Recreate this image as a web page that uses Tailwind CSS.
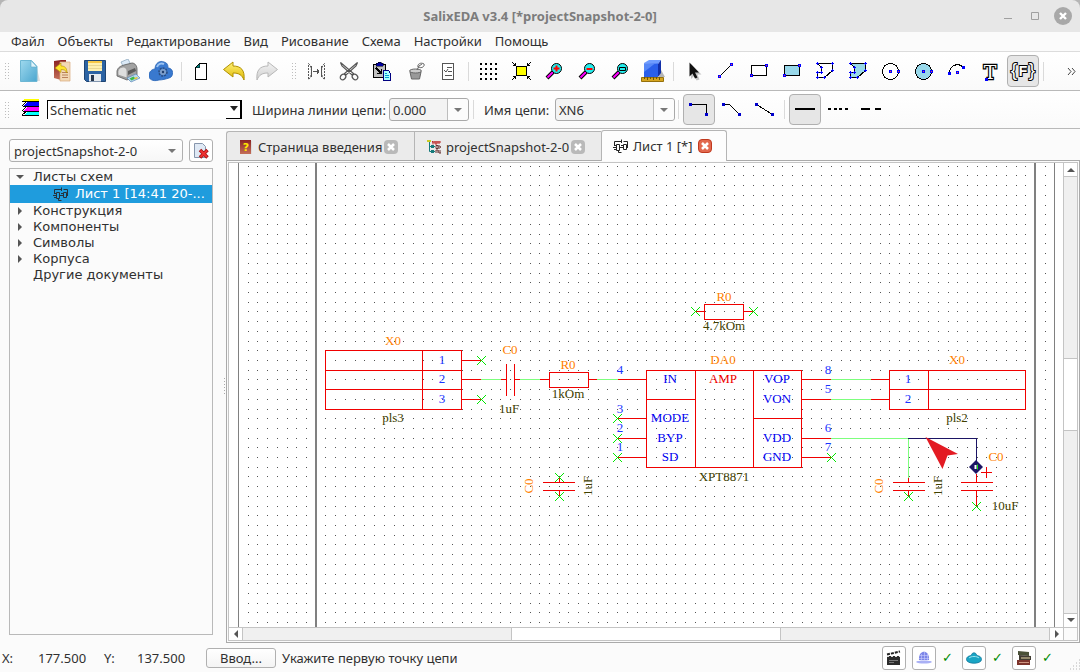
<!doctype html>
<html lang="ru">
<head>
  <meta charset="UTF-8">
  <meta name="viewport" content="width=device-width, initial-scale=1.0">
  <script src="https://cdn.jsdelivr.net/npm/@tailwindcss/browser@4"></script>
  <title>SalixEDA v3.4</title>
</head>
<body class="h-screen flex flex-col overflow-hidden bg-[#fbfbfb] font-['Noto_Sans',sans-serif] text-[13px] leading-4 text-[#303030]">

  <!-- shared icon parts -->
  <svg class="absolute size-0">
    <defs>
      <linearGradient id="gPage" x1="0" y1="0" x2="1" y2="1"><stop offset="0" stop-color="#9fd9ee"/><stop offset="1" stop-color="#4ba6cf"/></linearGradient>
      <linearGradient id="gYellow" x1="0" y1="0" x2="0" y2="1"><stop offset="0" stop-color="#fff27a"/><stop offset="1" stop-color="#dfb800"/></linearGradient>
      <linearGradient id="gGrey" x1="0" y1="0" x2="0" y2="1"><stop offset="0" stop-color="#f4f4f4"/><stop offset="1" stop-color="#cfcfcf"/></linearGradient>
      <linearGradient id="gBook" x1="0" y1="0" x2="0" y2="1"><stop offset="0" stop-color="#8a2222"/><stop offset="1" stop-color="#c4705a"/></linearGradient>
      <symbol id="sheet" viewBox="0 0 16 16">
        <path d="M1.500 7V3.500h7M8.500 1.500v3.500M10.500 3.500h4V9M0 9.500h3M7 9.500h3M13 9.500h2M5.500 13v1.500h3" fill="none" stroke="currentColor"/>
        <path d="M3.500 6.500h3v6h-3zM10.500 6.500h3v5h-3z" fill="none" stroke="currentColor"/>
        <path d="M1 7.500h2M1 11.500h2M8 7.500h2" stroke="currentColor"/>
      </symbol>
      <symbol id="cross" viewBox="0 0 14 14">
        <path d="M4 4l6 6M10 4l-6 6" stroke="#fff" stroke-width="2.500"/>
      </symbol>
    </defs>
  </svg>

  <!-- title bar -->
  <header class="bg-[#b5b5b5]">
    <div class="relative flex h-8 items-center justify-center rounded-t-lg bg-[#e7e7e7]">
      <h1 class="font-bold text-[#7c7c7c]">SalixEDA v3.4 [*projectSnapshot-2-0]</h1>
      <div class="absolute inset-y-0 right-2 flex items-center gap-[11px]">
        <button aria-label="Свернуть" class="size-4"><svg class="size-4" viewBox="0 0 16 16"><path d="M4 10.500h8" stroke="#a0a0a0"/></svg></button>
        <button aria-label="Развернуть" class="size-4"><svg class="size-4" viewBox="0 0 16 16"><path d="M4.500 4.500h7v7h-7z" fill="none" stroke="#a0a0a0"/></svg></button>
        <button aria-label="Закрыть" class="size-[18px]"><svg class="size-[18px]" viewBox="0 0 18 18"><circle cx="9" cy="9" r="9" fill="#a8a8a8"/><path d="M6 6l6 6M12 6l-6 6" stroke="#fff" stroke-width="2.400"/></svg></button>
      </div>
    </div>
  </header>

  <!-- menu -->
  <nav class="flex h-5 items-center gap-[13px] border-b border-[#dcdcdc] pb-[2px] pl-[11px]">
    <a href="#">Файл</a>
    <a href="#">Объекты</a>
    <a href="#">Редактирование</a>
    <a href="#">Вид</a>
    <a href="#">Рисование</a>
    <a href="#">Схема</a>
    <a href="#">Настройки</a>
    <a href="#">Помощь</a>
  </nav>

  <!-- main toolbar -->
  <div class="flex h-[39px] items-center border-b border-[#b9b9b9] bg-linear-to-b from-white to-[#fafafa]">
    <svg class="mr-[3px] h-6 w-[10px]" viewBox="0 0 10 24" shape-rendering="crispEdges"><path d="M5.500 4v17M8.500 4v17" stroke="#bdbdbd" stroke-dasharray="1 2"/></svg>
    <div class="flex gap-px">
      <button aria-label="Новый" class="flex h-8 w-8 items-center justify-center"><svg class="size-6" viewBox="0 0 24 24"><path d="M20 9l3 13H8z" fill="#ddd"/><path d="M3.500 1.500h11l5.500 6v15h-16.500z" fill="url(#gPage)" stroke="#6db7d4"/><path d="M14 1.500v6.500h6z" fill="#e0f4fb" stroke="#5fa9c8" stroke-width=".6"/></svg></button>
      <button aria-label="Открыть" class="flex h-8 w-8 items-center justify-center"><svg class="size-6" viewBox="0 0 24 24"><path d="M4 2l7-1h5v3h-5v17l-7-2z" fill="url(#gBook)"/><path d="M10 3h10v19h-10z" fill="#f3d9b5" stroke="#d9ab7d" stroke-width=".7"/><path d="M12 16h6M12 18.500h6M12 13.500h6" stroke="#b9825c"/><path d="M5 9l6-5v3c4 0 6 2 6 7-1.500-3-3-3.500-6-3.500v3z" fill="#ffe52e" stroke="#b08c00" stroke-width=".6"/></svg></button>
      <button aria-label="Сохранить" class="flex h-8 w-8 items-center justify-center"><svg class="size-6" viewBox="0 0 24 24"><path d="M1.500 1.500h21v21h-19l-2-2z" fill="#2c63a3" stroke="#1f4573"/><path d="M5 2h14v10H5z" fill="#fff1b0"/><path d="M5 2h14v2H5z" fill="#f7c948"/><path d="M5 6.500h14M5 9.500h14" stroke="#e0cf8a" stroke-width=".7"/><path d="M6 15h12v7.500H6z" fill="#e6eaee"/><path d="M8 16h3v6H8z" fill="#27374d"/></svg></button>
      <button aria-label="Печать" class="flex h-8 w-8 items-center justify-center"><svg class="size-6" viewBox="0 0 24 24"><path d="M5 3l7-3 3 6-7 3z" fill="#dceaf7" stroke="#8fa9c0" stroke-width=".8"/><path d="M1 12c1-4 4-5 7-6l8-2c3 0 5 3 5 6v6l-10 5-10-4z" fill="#a3a3a3" stroke="#5b5b5b" stroke-width=".8"/><path d="M2 12c1-3 3-4 6-4 3 1 3 3 3 6v5l-9-3z" fill="#dedede" stroke="#888" stroke-width=".6"/><path d="M12 12l7-3 1 3-8 4z" fill="#5c5c5c"/><path d="M11 19l9-4 4 4-9 4z" fill="#b8d8f0" stroke="#5b87b5" stroke-width=".7"/><path d="M13.500 19.500l4-2 2 2-4 2z" fill="#3dba4c"/><path d="M18 19l3-1 1 1-3 1.500z" fill="#e9c92f"/></svg></button>
      <button aria-label="Облако" class="flex h-8 w-8 items-center justify-center"><svg class="size-6" viewBox="0 0 24 24"><path d="M6 10C6 4 11 1 15 3c4 1 4 4 4 6 6 0 6 9 1 10-3 1-7 2-10 2C4 23-1 20 0 16c0-3 3-6 6-6z" fill="#3979cf" stroke="#2763b5" stroke-width=".8"/><path d="M8 8c1-3 4-4.500 7-3" fill="none" stroke="#9cc4f2" stroke-width="2"/><circle cx="14" cy="13" r="4" fill="none" stroke="#2b4d80" stroke-width="1.500" stroke-dasharray="2 1"/><circle cx="14" cy="13" r="3" fill="#7f9fc9"/><circle cx="14" cy="13" r="1.200" fill="#203f6e"/></svg></button>
    </div>
    <span class="mr-[3px] ml-1 h-[19px] w-px bg-[#dadada]"></span>
    <div class="flex gap-px">
      <button aria-label="Лист" class="flex h-8 w-8 items-center justify-center"><svg class="size-6" viewBox="0 0 24 24" shape-rendering="crispEdges"><path d="M6.500 8.500l4-4h7v16h-11z" fill="#fff" stroke="#000"/><path d="M7 8h4V5z" fill="#008080"/><path d="M6.500 8.500h4v-4" fill="none" stroke="#004040"/></svg></button>
      <button aria-label="Отменить" class="flex h-8 w-8 items-center justify-center"><svg class="size-6" viewBox="0 0 24 24"><path d="M1.500 10.500L11 3v4c8 0 12 4 11 14-2-5-5-7-11-7v4z" fill="url(#gYellow)" stroke="#b09000"/></svg></button>
      <button aria-label="Повторить" class="flex h-8 w-8 items-center justify-center"><svg class="size-6" viewBox="0 0 24 24"><path d="M22.500 10.500L13 3v4c-8 0-12 4-11 14 2-5 5-7 11-7v4z" fill="url(#gGrey)" stroke="#b8b8b8"/></svg></button>
    </div>
    <svg class="mr-[3px] ml-1 h-6 w-[10px]" viewBox="0 0 10 24" shape-rendering="crispEdges"><path d="M5.500 4v17M8.500 4v17" stroke="#bdbdbd" stroke-dasharray="1 2"/></svg>
    <div class="flex gap-px">
      <button aria-label="Зеркало" class="flex h-8 w-8 items-center justify-center"><svg class="size-6" viewBox="0 0 24 24" fill="none" stroke="#555"><path d="M4.500 4.500c4 3 4 13 0 16zM20.500 4.500c-4 3-4 13 0 16z" stroke-dasharray="2 1"/><path d="M7.500 7v11M17.500 7v11"/><path d="M9 12.500h6M13 10v5M14 11v3" shape-rendering="crispEdges"/></svg></button>
      <button aria-label="Вырезать" class="flex h-8 w-8 items-center justify-center"><svg class="size-6" viewBox="0 0 24 24" fill="none" stroke="#555" stroke-width="1.200"><path d="M3.500 3.500L5 7l10 9 1.500-1.500zM20.500 3.500L19 7 9 16l-1.500-1.500z" fill="#fff"/><ellipse cx="6" cy="18" rx="2.500" ry="3" transform="rotate(45 6 18)"/><ellipse cx="18" cy="18" rx="2.500" ry="3" transform="rotate(-45 18 18)"/></svg></button>
      <button aria-label="Вставить" class="flex h-8 w-8 items-center justify-center"><svg class="size-6" viewBox="0 0 24 24" shape-rendering="crispEdges"><path d="M3.500 5.500h12v13h-12z" fill="#c0c0c0" stroke="#000"/><path d="M6 4h2V3h3v1h2v3H6z" fill="#0000a0" stroke="#000" stroke-width=".5"/><path d="M6 9l5 5M11.500 9.500v5h-5" stroke="#000" stroke-width="1.500" fill="none"/><path d="M13.500 11.500h5l2 3v6.500h-7z" fill="#aff" stroke="#000080"/><path d="M15 14.500h2M15 16.500h4M15 18.500h4" stroke="#00a0d0"/></svg></button>
      <button aria-label="Очистить" class="flex h-8 w-8 items-center justify-center"><svg class="size-6" viewBox="0 0 24 24" fill="none" stroke="#666"><path d="M7 13l1.500 7h8L18 13z" fill="#999"/><ellipse cx="12.500" cy="12" rx="6" ry="2" fill="#ccc"/><path d="M14 11l2-4M15 8c-1-3 3-5 6-3 1 2-2 5-6 3zM16 7l3-2"/></svg></button>
      <button aria-label="Проверить" class="flex h-8 w-8 items-center justify-center"><svg class="size-6" viewBox="0 0 24 24" fill="none" stroke="#555" shape-rendering="crispEdges"><path d="M6.500 4.500h11v16h-11z" fill="#fff"/><path d="M11 8.500h5M12 12.500h4M9 16.500h7"/><path d="M8 11l2 2 2-3" shape-rendering="auto"/></svg></button>
    </div>
    <span class="mr-[3px] ml-1 h-[19px] w-px bg-[#dadada]"></span>
    <div class="flex gap-px">
      <button aria-label="Сетка" class="flex h-8 w-8 items-center justify-center"><svg class="size-6" viewBox="0 0 24 24" shape-rendering="crispEdges"><path d="M4 5h18M4 10h18M4 15h18M4 20h18" stroke="#000" stroke-width="2" stroke-dasharray="2 3"/></svg></button>
      <button aria-label="Вписать" class="flex h-8 w-8 items-center justify-center"><svg class="size-6" viewBox="0 0 24 24" shape-rendering="crispEdges" stroke="#000" fill="none"><path d="M7.500 7.500h10v9h-10z" fill="#ff0"/><path d="M3 3l3 3M22 3l-3 3M3 21l3-3M22 21l-3-3M6.500 4v2.500H4M18.500 4v2.500H21M6.500 20v-2.500H4M18.500 20v-2.500H21"/></svg></button>
      <button aria-label="Увеличить" class="flex h-8 w-8 items-center justify-center"><svg class="size-6" viewBox="0 0 24 24"><path d="M5 19l6-6" stroke="#000" stroke-width="4"/><path d="M5.500 18.500L11 13" stroke="#f0f" stroke-width="2"/><circle cx="14.500" cy="9.500" r="5" fill="#2ee" stroke="#000"/><path d="M11.500 9.500h6M14.500 6.500v6" stroke="#f00" stroke-width="2"/></svg></button>
      <button aria-label="Уменьшить" class="flex h-8 w-8 items-center justify-center"><svg class="size-6" viewBox="0 0 24 24"><path d="M5 19l6-6" stroke="#000" stroke-width="4"/><path d="M5.500 18.500L11 13" stroke="#f0f" stroke-width="2"/><circle cx="14.500" cy="9.500" r="5" fill="#2ee" stroke="#000"/><path d="M11.500 10h6" stroke="#f00" stroke-width="2"/></svg></button>
      <button aria-label="Область" class="flex h-8 w-8 items-center justify-center"><svg class="size-6" viewBox="0 0 24 24"><path d="M5 19l6-6" stroke="#000" stroke-width="4"/><path d="M5.500 18.500L11 13" stroke="#f0f" stroke-width="2"/><circle cx="14.500" cy="9.500" r="5" fill="#2ee" stroke="#000"/><path d="M11.500 8.500h6v3h-6z" fill="none" stroke="#000"/></svg></button>
      <button aria-label="3D" class="flex h-8 w-8 items-center justify-center"><svg class="size-6" viewBox="0 0 24 24"><path d="M19 9l5 9h-6z" fill="#b5b5b5"/><path d="M3 4l5-3h12l-3 4z" fill="#6f9dff"/><path d="M3 4.500h14V18H3z" fill="#2a5fea"/><path d="M3 4.500l11 0L3 13z" fill="#5587f7"/><path d="M17 5l3-4v13l-3 4z" fill="#1230a8"/><path d="M.5 18.500h22v4H.500z" fill="#d6a51f" stroke="#95700b"/><path d="M3.500 18v2M6.500 18v3M9.500 18v2M12.500 18v3M15.500 18v2M18.500 18v3" stroke="#6d5205"/></svg></button>
    </div>
    <span class="mr-[3px] ml-1 h-[19px] w-px bg-[#dadada]"></span>
    <div class="flex gap-px">
      <button aria-label="Выбор" class="flex h-8 w-8 items-center justify-center"><svg class="size-6" viewBox="0 0 24 24"><path d="M10 5v15l3.500-3.500 2 5 3-1-2-5h4z" fill="#c4c4c4"/><path d="M8.500 3.500v14l3-3 2.500 5 2.500-1-2.500-5h4z" fill="#111"/></svg></button>
      <button aria-label="Линия" class="flex h-8 w-8 items-center justify-center"><svg class="size-6" viewBox="0 0 24 24" shape-rendering="crispEdges"><path d="M5.500 17.500l12-12" stroke="#000"/><path d="M4 16h3v3H4zM16 4h3v3h-3z" fill="#00f"/><path d="M5 17h1v1H5zM17 5h1v1h-1z" fill="#f44"/></svg></button>
      <button aria-label="Прямоугольник" class="flex h-8 w-8 items-center justify-center"><svg class="size-6" viewBox="0 0 24 24" shape-rendering="crispEdges"><path d="M4.500 6.500h15v10h-15z" stroke="#000" fill="#fff"/><path d="M3 15h3v3H3zM18 5h3v3h-3z" fill="#00f"/><path d="M4 16h1v1H4zM19 6h1v1h-1z" fill="#f44"/></svg></button>
      <button aria-label="Заполненный прямоугольник" class="flex h-8 w-8 items-center justify-center"><svg class="size-6" viewBox="0 0 24 24" shape-rendering="crispEdges"><path d="M4.500 6.500h15v10h-15z" stroke="#000" fill="#98d8ea"/><path d="M3 15h3v3H3zM18 5h3v3h-3z" fill="#00f"/><path d="M4 16h1v1H4zM19 6h1v1h-1z" fill="#f44"/></svg></button>
      <button aria-label="Многоугольник" class="flex h-8 w-8 items-center justify-center"><svg class="size-6" viewBox="0 0 24 24" shape-rendering="crispEdges"><path d="M4.500 4.500h15v7l-8 7h-7v-5h4v-5z" stroke="#000" fill="#fff"/><path d="M3 4.500h3M4.500 3v3M18 4.500h3M19.500 3v3M18 11.500h3M19.500 10v3M10 18.500h3M11.500 17v3M3 18.500h3M4.500 17v3M3 13.500h3M4.500 12v3M7 13.500h3M8.500 12v3M7 8.500h3M8.500 7v3" stroke="#00f"/></svg></button>
      <button aria-label="Заполненный многоугольник" class="flex h-8 w-8 items-center justify-center"><svg class="size-6" viewBox="0 0 24 24" shape-rendering="crispEdges"><path d="M4.500 4.500h15v7l-8 7h-7v-5h4v-5z" stroke="#000" fill="#98d8ea"/><path d="M3 4.500h3M4.500 3v3M18 4.500h3M19.500 3v3M18 11.500h3M19.500 10v3M10 18.500h3M11.500 17v3M3 18.500h3M4.500 17v3M3 13.500h3M4.500 12v3M7 13.500h3M8.500 12v3M7 8.500h3M8.500 7v3" stroke="#00f"/></svg></button>
      <button aria-label="Окружность" class="flex h-8 w-8 items-center justify-center"><svg class="size-6" viewBox="0 0 24 24" shape-rendering="crispEdges"><circle cx="11.500" cy="12.500" r="8" stroke="#000" fill="#fff"/><path d="M10 11h3v3h-3zM18 11h3v3h-3z" fill="#00f"/><path d="M11 12h1v1h-1zM19 12h1v1h-1z" fill="#f44"/></svg></button>
      <button aria-label="Круг" class="flex h-8 w-8 items-center justify-center"><svg class="size-6" viewBox="0 0 24 24" shape-rendering="crispEdges"><circle cx="11.500" cy="12.500" r="8" stroke="#000" fill="#98d8ea"/><path d="M10 11h3v3h-3zM18 11h3v3h-3z" fill="#00f"/><path d="M11 12h1v1h-1zM19 12h1v1h-1z" fill="#f44"/></svg></button>
      <button aria-label="Дуга" class="flex h-8 w-8 items-center justify-center"><svg class="size-6" viewBox="0 0 24 24" shape-rendering="crispEdges"><path d="M4.500 14.500A8 8 0 0 1 18.500 8.500" stroke="#000" fill="none"/><path d="M3 13h3v3H3zM17 7h3v3h-3zM11 12h3v3h-3z" fill="#00f"/><path d="M12 13h1v1h-1z" fill="#f44"/></svg></button>
      <button aria-label="Текст" class="flex h-8 w-8 items-center justify-center"><svg class="size-6" viewBox="0 0 24 24"><text x="12" y="20" text-anchor="middle" font-family="DejaVu Serif" font-size="19" fill="#fff" stroke="#000" stroke-width="2.400" paint-order="stroke">T</text><path d="M7 19h3v3H7z" fill="#00f"/></svg></button>
      <button aria-label="Формула" class="flex h-8 w-8 items-center justify-center rounded-sm border border-[#b0b0b0] bg-[#e6e6e6]"><svg class="size-6 overflow-visible" viewBox="0 0 24 24"><g text-anchor="middle" fill="#fff" stroke="#000" stroke-width="2" paint-order="stroke" font-family="Liberation Sans"><text x="3" y="17" font-size="19">{</text><text x="21" y="17" font-size="19">}</text><text x="12" y="17" font-weight="bold" font-size="14">F</text></g></svg></button>
    </div>
    <span class="mr-[3px] ml-1 h-[19px] w-px bg-[#dadada]"></span>
    <button aria-label="Ещё" class="mr-[3px] ml-auto flex h-8 w-3 items-center"><svg class="h-3 w-3" viewBox="0 0 12 12" fill="none" stroke="#444"><path d="M3 3l3 3.500-3 3.500M7 3l3 3.500-3 3.500"/></svg></button>
  </div>

  <!-- net toolbar -->
  <div class="flex h-[38px] items-center border-b border-[#b9b9b9] bg-linear-to-b from-white to-[#fafafa]">
    <svg class="mr-[11px] h-6 w-[10px] shrink-0" viewBox="0 0 10 24" shape-rendering="crispEdges"><path d="M5.500 4v17M8.500 4v17" stroke="#bdbdbd" stroke-dasharray="1 2"/></svg>
    <svg class="mb-1 h-[19px] w-[19px] shrink-0" viewBox="0 0 19 19" shape-rendering="crispEdges">
      <path d="M4 1h14v2H1z" fill="#ff0"/><path d="M6 4h12v4H2z" fill="#00f"/><path d="M6 9h12v4H2z" fill="#f0f"/><path d="M6 14h12v4H2z" fill="#0ff"/>
      <path d="M1 3.500h17M2 8.500h16M2 13.500h16M1 17.500h17M1 8l4-4M1 13l4-4M1 17l4-3" stroke="#000"/>
    </svg>
    <div class="relative ml-[7px] w-[195px]">
      <select aria-label="Слой" class="block h-[19px] w-full appearance-none border-t border-r-2 border-l border-black bg-white pl-[2px] leading-4"><option>Schematic net</option></select>
      <svg class="pointer-events-none absolute top-0 right-0 h-[19px] w-4" viewBox="0 0 16 19"><path d="M0 18.500h15.500V2" fill="none" stroke="#000"/><path d="M4 6h8l-4 5z" fill="#222"/></svg>
    </div>
    <label for="width" class="ml-[10px] w-[137px] whitespace-nowrap">Ширина линии цепи:</label>
    <div class="flex h-[23px] w-20 rounded-[3px] border border-[#a9a9a9] bg-[#f3f3f3]">
      <input id="width" value="0.000" class="w-0 grow border-r border-[#bdbdbd] pl-[3px] outline-none">
      <button aria-label="Список толщин" class="flex w-5 items-center justify-center rounded-r-[3px] bg-[#fcfcfc]"><svg class="h-2 w-2" viewBox="0 0 8 8"><path d="M0 2h8L4 6z" fill="#777"/></svg></button>
    </div>
    <span class="mr-[10px] ml-1 h-[19px] w-px bg-[#dadada]"></span>
    <label for="net" class="w-[71px] whitespace-nowrap">Имя цепи:</label>
    <div class="flex h-[23px] w-[120px] rounded-[3px] border border-[#a9a9a9] bg-[#f3f3f3]">
      <input id="net" value="XN6" class="w-0 grow border-r border-[#bdbdbd] pl-[3px] outline-none">
      <button aria-label="Список цепей" class="flex w-5 items-center justify-center rounded-r-[3px] bg-[#fcfcfc]"><svg class="h-2 w-2" viewBox="0 0 8 8"><path d="M0 2h8L4 6z" fill="#777"/></svg></button>
    </div>
    <span class="mx-[3px] h-[19px] w-px bg-[#dadada]"></span>
    <div class="ml-px flex gap-px">
      <button aria-label="Прямой угол" class="flex h-[31px] w-8 items-center justify-center rounded-sm border border-[#b0b0b0] bg-[#e6e6e6]"><svg class="size-6" viewBox="0 0 24 24" shape-rendering="crispEdges"><path d="M3.500 6.500h16v10" stroke="#000" fill="none"/><path d="M2 5h3v3H2zM18 15h3v3h-3z" fill="#00c"/></svg></button>
      <button aria-label="Скос" class="flex h-[31px] w-8 items-center justify-center"><svg class="size-6" viewBox="0 0 24 24" shape-rendering="crispEdges"><path d="M3.500 6.500h6l10 10" stroke="#000" fill="none"/><path d="M2 5h3v3H2zM18 15h3v3h-3z" fill="#00c"/></svg></button>
      <button aria-label="Прямая" class="flex h-[31px] w-8 items-center justify-center"><svg class="size-6" viewBox="0 0 24 24" shape-rendering="crispEdges"><path d="M3.500 6.500l16 10" stroke="#000" fill="none"/><path d="M2 5h3v3H2zM18 15h3v3h-3z" fill="#00c"/></svg></button>
    </div>
    <span class="mx-[3px] h-[19px] w-px bg-[#dadada]"></span>
    <div class="ml-px flex gap-px">
      <button aria-label="Сплошная" class="flex h-[31px] w-8 items-center justify-center rounded-sm border border-[#b0b0b0] bg-[#e6e6e6]"><svg class="size-6" viewBox="0 0 24 24" shape-rendering="crispEdges"><path d="M2 11h20" stroke="#000" stroke-width="2"/></svg></button>
      <button aria-label="Пунктир" class="flex h-[31px] w-8 items-center justify-center"><svg class="size-6" viewBox="0 0 24 24" shape-rendering="crispEdges"><path d="M2 11h20" stroke="#000" stroke-width="2" stroke-dasharray="3 2.667"/></svg></button>
      <button aria-label="Штрих" class="flex h-[31px] w-8 items-center justify-center"><svg class="size-6" viewBox="0 0 24 24" shape-rendering="crispEdges"><path d="M2 11h20" stroke="#000" stroke-width="2" stroke-dasharray="9 5"/></svg></button>
    </div>
  </div>

  <main class="flex min-h-0 grow">
    <!-- project panel -->
    <aside class="flex w-[213px] shrink-0 flex-col gap-[6px] pt-[10px] pb-2 pl-[9px]">
      <div class="flex h-[23px] gap-[6px]">
        <div class="relative grow">
          <select aria-label="Проект" class="block h-full w-full appearance-none rounded-[3px] border border-[#b0b0b0] bg-linear-to-b from-white to-[#f7f7f7] pl-1"><option>projectSnapshot-2-0</option></select>
          <svg class="pointer-events-none absolute top-2 right-[7px] h-2 w-2" viewBox="0 0 8 8"><path d="M0 2h8L4 6z" fill="#777"/></svg>
        </div>
        <button aria-label="Закрыть проект" class="flex w-6 items-center justify-center rounded-[3px] border border-[#b0b0b0] bg-white">
          <svg class="size-4" viewBox="0 0 16 16"><path d="M1.500 .5h8l3 3v11h-11z" fill="#dfe9f5" stroke="#8796ac"/><path d="M7 7l7.500 7.500M14.500 7L7 14.500" stroke="#a30f0f" stroke-width="3.500"/><path d="M7.500 7.500l6.500 6.500M14 7.500L7.500 14" stroke="#ee3030" stroke-width="2"/></svg>
        </button>
      </div>
      <ul class="grow border border-[#b9b9b9] font-['DejaVu_Sans',sans-serif] text-[13px] leading-4">
        <li class="flex h-4 items-center"><svg class="mr-[9px] ml-[6px] h-2 w-2" viewBox="0 0 8 8"><path d="M0 2h8L4 6z" fill="#555"/></svg>Листы схем</li>
        <li class="flex h-[18px] items-center bg-[#1f9cdd] whitespace-nowrap text-white"><svg class="mr-[6px] ml-[43px] size-4 text-[#26323c]"><use href="#sheet"/></svg>Лист 1 [14:41 20-...</li>
        <li class="flex h-4 items-center"><svg class="mr-[9px] ml-[6px] h-2 w-2" viewBox="0 0 8 8"><path d="M2 0v8l4-4z" fill="#555"/></svg>Конструкция</li>
        <li class="flex h-4 items-center"><svg class="mr-[9px] ml-[6px] h-2 w-2" viewBox="0 0 8 8"><path d="M2 0v8l4-4z" fill="#555"/></svg>Компоненты</li>
        <li class="flex h-4 items-center"><svg class="mr-[9px] ml-[6px] h-2 w-2" viewBox="0 0 8 8"><path d="M2 0v8l4-4z" fill="#555"/></svg>Символы</li>
        <li class="flex h-4 items-center"><svg class="mr-[9px] ml-[6px] h-2 w-2" viewBox="0 0 8 8"><path d="M2 0v8l4-4z" fill="#555"/></svg>Корпуса</li>
        <li class="flex h-4 items-center pl-[23px]">Другие документы</li>
      </ul>
    </aside>

    <div class="flex w-[13px] shrink-0 items-center justify-end pr-px">
      <svg class="h-4 w-px" viewBox="0 0 1 16"><path d="M.5 0v16" stroke="#aaa" stroke-dasharray="1 2"/></svg>
    </div>

    <section class="flex min-w-0 grow flex-col pt-px">
      <!-- tabs -->
      <div class="z-10 -mb-px flex h-[31px] items-end">
        <div class="mb-px flex h-[29px] w-[188px] items-center rounded-tl-[3px] border-t border-l border-[#b5b5b5] bg-[#ebebeb] pt-[2px] pl-3">
          <svg class="mr-[5px] size-[14px]" viewBox="0 0 14 14"><path d="M1 0h11v14H1z" fill="url(#gBook)"/><path d="M12.500 1v13" stroke="#ddd"/><text x="7" y="11" text-anchor="middle" font-family="DejaVu Sans" font-weight="bold" font-size="11" fill="#ffe600">?</text></svg>
          <span class="grow whitespace-nowrap">Страница введения</span>
          <button aria-label="Закрыть вкладку" class="mr-4 size-[14px] rounded-sm bg-[#b9b9b9]"><svg class="size-[14px]"><use href="#cross"/></svg></button>
        </div>
        <div class="mb-px flex h-[29px] w-[187px] items-center border-t border-l border-[#b5b5b5] bg-[#ebebeb] pt-[2px] pl-3">
          <svg class="mr-[5px] size-[14px]" viewBox="0 0 14 14"><path d="M2.500 2v9.500H8M2.500 6.500H8" fill="none" stroke="#157a7a"/><path d="M0 0h4v2H0z" fill="#cc2"/><path d="M4 5h3v3H4zM4 10h3v3H4z" fill="#157a7a"/><path d="M5 1.500h1v3M8 1v3h2V1M12 1v3M5 2h9" stroke="#b22" fill="none"/><path d="M9 5.500h2v3H9zM12 5v4M13 6l1 2M9 13v-3h2v3M12 10v3h2v-3" stroke="#633" fill="none"/></svg>
          <span class="grow whitespace-nowrap">projectSnapshot-2-0</span>
          <button aria-label="Закрыть вкладку" class="mr-4 size-[14px] rounded-sm bg-[#b9b9b9]"><svg class="size-[14px]"><use href="#cross"/></svg></button>
        </div>
        <div class="flex h-[31px] w-[126px] items-center rounded-t-[3px] border-x border-t border-[#b5b5b5] bg-[#fdfdfd] pl-[11px]">
          <svg class="mr-1 size-4 text-[#222]"><use href="#sheet"/></svg>
          <span class="grow whitespace-nowrap">Лист 1 [*]</span>
          <button aria-label="Закрыть вкладку" class="mr-[14px] size-[14px] rounded-sm border border-[#c0391e] bg-[#e2694f]"><svg class="-m-px size-[14px]"><use href="#cross"/></svg></button>
        </div>
      </div>

      <div class="flex min-h-0 grow border border-[#aaa] p-px">
       <div class="flex min-w-0 grow flex-col border border-[#c4c4c4]">
        <div class="flex min-h-0 grow">
          <!-- schematic -->
          <div class="min-w-0 grow bg-white">
            <svg class="block h-full w-full">
              <g transform="translate(-229 -163)">
                <path id="grid" stroke="#555" shape-rendering="crispEdges"/>
                <g fill="none" shape-rendering="crispEdges">
                  <path d="M238.500 163v480M1054.500 163v480" stroke="#808080"/>
                  <path d="M316 163v480M1035 163v480" stroke="#808080" stroke-width="2"/>
                  <!-- nets -->
                  <path d="M481 379.500h20M520 379.500h20M597 379.500h21M831 379.500h40M831 399.500h40M831 438.500h77M908.500 438v40" stroke="#7dff7d"/>
                  <path d="M908 438.500h68.500v24" stroke="#1b1464"/>
                  <!-- components -->
                  <g stroke="#f00000">
                    <path d="M325.500 350.500h136v59h-136zM325.500 370.500h136M325.500 389.500h136M422.500 350.500v59M461 360.500h20M461 379.500h20M461 399.500h20"/>
                    <path d="M501 379.500h5M506.500 364v32M514.500 364v32M514 379.500h6"/>
                    <path d="M540 379.500h9M549.500 372.500h39v15h-39zM588 379.500h9"/>
                    <path d="M618 379.500h28M618 418.500h28M618 438.500h28M618 457.500h28M646.500 370.500h155v97h-155zM695.500 370.500v97M753.500 370.500v97M646.500 399.500h49M753.500 418.500h48M801 379.500h30M801 399.500h30M801 438.500h30M801 457.500h30"/>
                    <path d="M871 379.500h18M871 399.500h18M889.500 370.500h136v39h-136zM889.500 389.500h136M928.500 370.500v39"/>
                    <path d="M695 311.500h9M704.500 304.500h39v15h-39zM743 311.500h10"/>
                    <path d="M543 482.500h32M543 490.500h32M559.500 477v5M559.500 490v6"/>
                    <path d="M893 482.500h32M893 490.500h32M908.500 478v4M908.500 490v6"/>
                    <path d="M961 482.500h32M961 490.500h32M976.500 474v8M976.500 490v16M981 472.500h11M986.500 467v11"/>
                  </g>
                </g>
                <!-- unconnected pins -->
                <g id="pins"></g>
                <path d="M976 460l7 7-7 7-7-7z" fill="#1b1464"/>
                <path d="M974.500 465v4h2v-4z" fill="#fff"/><path d="M977.500 464.500v5" stroke="#1d1"/>
                <path d="M925.500 437l32.500 17-10.500 1.500-5 13.500z" fill="#e31b23"/>
                <g font-family="Liberation Serif" font-size="13" text-anchor="middle">
                  <g fill="#ff7f00">
                    <text x="393" y="345">X0</text><text x="510" y="354">C0</text><text x="568" y="369">R0</text>
                    <text x="724" y="301">R0</text><text x="723" y="364">DA0</text><text x="957" y="364">X0</text><text x="996" y="461">C0</text>
                    <text transform="translate(533 486) rotate(-90)">C0</text><text transform="translate(883 486) rotate(-90)">C0</text>
                  </g>
                  <g fill="#404000">
                    <text x="393" y="422">pls3</text><text x="509" y="413">1uF</text><text x="568" y="398">1kOm</text><text x="724" y="330">4.7kOm</text>
                    <text x="724" y="481">XPT8871</text><text x="957" y="422">pls2</text><text x="1005" y="510">10uF</text>
                    <text transform="translate(592 486) rotate(-90)">1uF</text><text transform="translate(942 486) rotate(-90)">1uF</text>
                  </g>
                  <g fill="#1a34ff">
                    <text x="442" y="364">1</text><text x="442" y="383">2</text><text x="442" y="403">3</text>
                    <text x="620" y="374">4</text><text x="620" y="413">3</text><text x="620" y="432">2</text><text x="620" y="451">1</text>
                    <text x="828" y="374">8</text><text x="828" y="393">5</text><text x="828" y="432">6</text><text x="828" y="451">7</text>
                    <text x="908" y="383">1</text><text x="908" y="403">2</text>
                  </g>
                  <g fill="#0000f0">
                    <text x="670" y="383">IN</text><text x="670" y="422">MODE</text><text x="670" y="442">BYP</text><text x="670" y="461">SD</text>
                    <text x="777" y="383">VOP</text><text x="777" y="403">VON</text><text x="777" y="442">VDD</text><text x="777" y="461">GND</text>
                  </g>
                  <text x="723" y="383" fill="#f00000">AMP</text>
                </g>
              </g>
            </svg>
          </div>
          <div class="flex w-[14px] shrink-0 flex-col border-l border-[#c4c4c4] bg-[#f0f0f0]">
            <button aria-label="Вверх" class="flex h-[14px] items-center justify-center border-b border-[#c4c4c4] bg-white"><svg class="h-2 w-2" viewBox="0 0 8 8"><path d="M0 6h8L4 2z" fill="#555"/></svg></button>
            <div class="grow-[181]"></div>
            <div class="grow-[72] border-y border-[#c4c4c4] bg-white"></div>
            <div class="grow-[182]"></div>
            <button aria-label="Вниз" class="flex h-[14px] items-center justify-center border-t border-[#c4c4c4] bg-white"><svg class="h-2 w-2" viewBox="0 0 8 8"><path d="M0 2h8L4 6z" fill="#555"/></svg></button>
          </div>
        </div>
        <div class="flex h-[13px] shrink-0 border-t border-[#c4c4c4] bg-[#f0f0f0]">
          <button aria-label="Влево" class="flex w-[14px] items-center justify-center border-r border-[#c4c4c4] bg-white"><svg class="h-2 w-2" viewBox="0 0 8 8"><path d="M6 0v8L2 4z" fill="#555"/></svg></button>
          <div class="grow-[268]"></div>
          <div class="grow-[269] border-x border-[#c4c4c4] bg-white"></div>
          <div class="grow-[268]"></div>
          <button aria-label="Вправо" class="flex w-[15px] items-center justify-center border-x border-[#c4c4c4] bg-white"><svg class="h-2 w-2" viewBox="0 0 8 8"><path d="M2 0v8l4-4z" fill="#555"/></svg></button>
          <span class="w-[13px] bg-[#fbfbfb]"></span>
        </div>
       </div>
      </div>
    </section>
  </main>

  <!-- status bar -->
  <footer class="flex h-[29px] shrink-0 items-center pl-[2px]">
    <span class="w-9">X:</span><span class="w-[66px]">177.500</span>
    <span class="w-[33px]">Y:</span><span class="w-[69px]">137.500</span>
    <button class="h-5 w-[70px] rounded-[3px] border border-[#b0b0b0] bg-linear-to-b from-white to-[#f4f4f4]">Ввод...</button>
    <span class="ml-[6px]">Укажите первую точку цепи</span>
    <div class="ml-auto flex items-center">
      <button aria-label="Видео" class="mr-[6px] flex size-6 items-center justify-center rounded-[3px] border border-[#b0b0b0] bg-white"><svg class="size-4" viewBox="0 0 16 16"><path d="M1 6h13v9H1z" fill="#2b2b2b"/><path d="M1 6.500h13" stroke="#ddd" stroke-dasharray="2 2"/><path d="M1 4.500L14 1.500" stroke="#222" stroke-width="2" stroke-dasharray="3 1"/><path d="M3 10.500h9M3 12.500h5" stroke="#777"/></svg></button>
      <button aria-label="Сервер" class="flex size-6 items-center justify-center rounded-[3px] border border-[#b0b0b0] bg-white"><svg class="size-4" viewBox="0 0 16 16"><path d="M3 10c-1-11 11-11 10 0z" fill="#7c86e8"/><path d="M0 12c1-2 15-2 16 0-2 2-14 2-16 0z" fill="#a9b0f5"/><path d="M5.500 4v6M8.500 2v8M11.500 4v6M3 5.500h10M3 8.500h10" stroke="#c9cdfb" stroke-width=".6"/></svg></button>
      <span class="w-[26px] pl-[6px] font-['DejaVu_Sans',sans-serif] text-[#008a00]">✓</span>
      <button aria-label="Облако" class="flex size-6 items-center justify-center rounded-[3px] border border-[#b0b0b0] bg-white"><svg class="size-4" viewBox="0 0 16 16"><path d="M.5 9.500C.5 6 4 6 5.500 5c.5-3 4.500-3 5 0 1.500 1 5 1 5 4.500 0 5-15 5-15 0z" fill="#1aa5c4" stroke="#0d6f94" stroke-width=".7"/><path d="M3 8c2-2 8-2 10 0" stroke="#9fe6f2" fill="none"/></svg></button>
      <span class="w-[26px] pl-[6px] font-['DejaVu_Sans',sans-serif] text-[#008a00]">✓</span>
      <button aria-label="Библиотека" class="flex size-6 items-center justify-center rounded-[3px] border border-[#b0b0b0] bg-white"><svg class="size-4" viewBox="0 0 16 16"><path d="M2 1l11 1v4L2 5z" fill="#4a5138"/><path d="M3 5l12 1v4H3z" fill="#413c33"/><path d="M5 8h9" stroke="#e8d9a8"/><path d="M1 10h13v5H1z" fill="#7d342c"/><path d="M3 12.500h10" stroke="#cf9480"/></svg></button>
      <span class="w-[26px] pl-[6px] font-['DejaVu_Sans',sans-serif] text-[#008a00]">✓</span>
      <svg class="ml-[6px] h-3 w-3 self-end" viewBox="0 0 12 12"><path d="M11 2h1M8 5h4M5 8h7M2 11h10" stroke="#b5b5b5" stroke-dasharray="1 2"/></svg>
    </div>
  </footer>

  <script>
    // grid dots snapped to whole pixels
    let d = '';
    for (let i = 0; i < 84; i++) {
      for (let j = 0; j < 50; j++) {
        d += `M${Math.floor(248.2 + i * 9.72)} ${Math.floor(166.25 + j * 9.71) + 0.5}h1`;
      }
    }
    document.getElementById('grid').setAttribute('d', d);

    const open = [[481, 360], [481, 399], [617, 418], [617, 438], [617, 457], [831, 457], [695, 311], [753, 311],
      [559, 477], [559, 496], [908, 496], [976, 506]];
    document.getElementById('pins').innerHTML = open
      .map(([x, y]) => `<path d="M${x - 4} ${y - 4}l9 9m0 -9l-9 9" stroke="#00e600" fill="none" shape-rendering="crispEdges"/>`)
      .join('');
  </script>
</body>
</html>
